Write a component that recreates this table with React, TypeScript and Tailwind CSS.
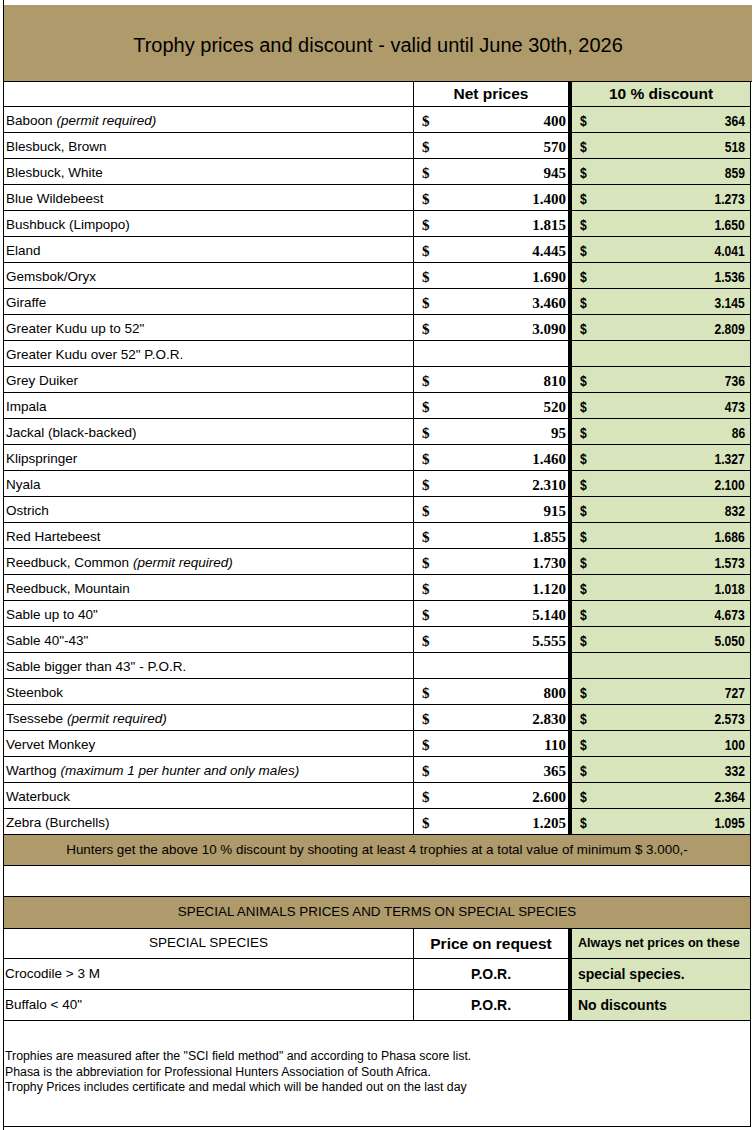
import React from 'react';

type Row = {
  name: string;
  note?: string;
  net?: string;
  disc?: string;
};

const rows: Row[] = [
  { name: 'Baboon', note: '(permit required)', net: '400', disc: '364' },
  { name: 'Blesbuck, Brown', net: '570', disc: '518' },
  { name: 'Blesbuck, White', net: '945', disc: '859' },
  { name: 'Blue Wildebeest', net: '1.400', disc: '1.273' },
  { name: 'Bushbuck (Limpopo)', net: '1.815', disc: '1.650' },
  { name: 'Eland', net: '4.445', disc: '4.041' },
  { name: 'Gemsbok/Oryx', net: '1.690', disc: '1.536' },
  { name: 'Giraffe', net: '3.460', disc: '3.145' },
  { name: 'Greater Kudu up to 52"', net: '3.090', disc: '2.809' },
  { name: 'Greater Kudu over 52" P.O.R.' },
  { name: 'Grey Duiker', net: '810', disc: '736' },
  { name: 'Impala', net: '520', disc: '473' },
  { name: 'Jackal (black-backed)', net: '95', disc: '86' },
  { name: 'Klipspringer', net: '1.460', disc: '1.327' },
  { name: 'Nyala', net: '2.310', disc: '2.100' },
  { name: 'Ostrich', net: '915', disc: '832' },
  { name: 'Red Hartebeest', net: '1.855', disc: '1.686' },
  { name: 'Reedbuck, Common', note: '(permit required)', net: '1.730', disc: '1.573' },
  { name: 'Reedbuck, Mountain', net: '1.120', disc: '1.018' },
  { name: 'Sable up to 40"', net: '5.140', disc: '4.673' },
  { name: 'Sable 40"-43"', net: '5.555', disc: '5.050' },
  { name: 'Sable bigger than 43" - P.O.R.' },
  { name: 'Steenbok', net: '800', disc: '727' },
  { name: 'Tsessebe', note: '(permit required)', net: '2.830', disc: '2.573' },
  { name: 'Vervet Monkey', net: '110', disc: '100' },
  { name: 'Warthog', note: '(maximum 1 per hunter and only males)', net: '365', disc: '332' },
  { name: 'Waterbuck', net: '2.600', disc: '2.364' },
  { name: 'Zebra (Burchells)', net: '1.205', disc: '1.095' },
];

const special = [
  { name: 'Crocodile > 3 M', terms: 'special species.' },
  { name: 'Buffalo < 40"', terms: 'No discounts' },
];

function PriceRow({ row }: { row: Row }) {
  return (
    <div className="flex h-[26px] border-b border-black">
      <div className="w-[410px] border-r border-black flex items-center pt-[3px] pl-[2px] text-[13.5px]">
        <span>{row.name}</span>
        {row.note && <span className="italic ml-[4px]">{row.note}</span>}
      </div>
      <div className="w-[158px] border-r-4 border-black flex items-center justify-between pt-[3px] pl-[8px] pr-[2px] font-['Liberation_Serif',serif] font-bold text-[15px]">
        {row.net && <span>$</span>}
        {row.net && <span>{row.net}</span>}
      </div>
      <div className="flex-1 bg-[#d8e4bc] flex items-center justify-between pt-[3px] pl-[8px] pr-[5px] font-bold text-[15.5px]">
        {row.disc && <span className="inline-block scale-x-[0.78] origin-left">$</span>}
        {row.disc && <span className="inline-block scale-x-[0.78] origin-right">{row.disc}</span>}
      </div>
    </div>
  );
}

export default function App() {
  return (
    <div className="h-[1130px] bg-white text-black font-['Liberation_Sans',Arial,sans-serif]">
      <div className="ml-[3px] h-full border-l border-black pt-[5px]">
        <div className="w-[748px]">
          {/* Title */}
          <div className="h-[77px] bg-[#ae9a6a] border-b border-black flex items-center justify-center pt-[4px] text-[20px]">
            Trophy prices and discount - valid until June 30th, 2026
          </div>

          <div className="w-[747px] border-r border-black">
            {/* Column headings */}
            <div className="flex h-[25px] border-b border-black font-bold text-[15.5px]">
              <div className="w-[410px] border-r border-black" />
              <div className="w-[158px] border-r-4 border-black flex items-center justify-center">Net prices</div>
              <div className="flex-1 bg-[#d8e4bc] flex items-center justify-center">10 % discount</div>
            </div>

            {rows.map((r) => (
              <PriceRow key={r.name} row={r} />
            ))}

            <div className="h-[31px] bg-[#ae9a6a] border-b border-black flex items-center justify-center text-[13.4px]">
              Hunters get the above 10 % discount by shooting at least 4 trophies at a total value of minimum $ 3.000,-
            </div>
            <div className="h-[31px] border-b border-black" />
            <div className="h-[32px] bg-[#ae9a6a] border-b border-black flex items-center justify-center text-[13.4px]">
              SPECIAL ANIMALS PRICES AND TERMS ON SPECIAL SPECIES
            </div>

            <div className="flex h-[30px] border-b border-black">
              <div className="w-[410px] border-r border-black flex items-center justify-center text-[13.5px]">SPECIAL SPECIES</div>
              <div className="w-[158px] border-r-4 border-black flex items-center justify-center font-bold text-[15.5px]">
                Price on request
              </div>
              <div className="flex-1 bg-[#d8e4bc] flex items-center pl-[6px] font-bold text-[12.6px] whitespace-nowrap overflow-hidden">
                Always net prices on these
              </div>
            </div>

            {special.map((s) => (
              <div key={s.name} className="flex h-[31px] border-b border-black">
                <div className="w-[410px] border-r border-black flex items-center pl-[1px] text-[13.5px]">{s.name}</div>
                <div className="w-[158px] border-r-4 border-black flex items-center justify-center font-bold text-[14px]">
                  P.O.R.
                </div>
                <div className="flex-1 bg-[#d8e4bc] flex items-center pl-[6px] font-bold text-[14px]">{s.terms}</div>
              </div>
            ))}

            {/* Notes */}
            <div className="h-[106px] border-b border-black pt-[28px] pl-[1px] text-[12.3px] leading-[15.5px]">
              <p>Trophies are measured after the "SCI field method" and according to Phasa score list.</p>
              <p>Phasa is the abbreviation for Professional Hunters Association of South Africa.</p>
              <p>Trophy Prices includes certificate and medal which will be handed out on the last day</p>
            </div>
          </div>
        </div>
      </div>
    </div>
  );
}
